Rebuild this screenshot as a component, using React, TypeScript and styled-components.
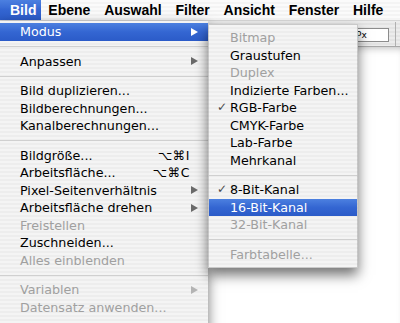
import React from 'react'
import styled, { createGlobalStyle, css } from 'styled-components'

const GlobalStyle = createGlobalStyle`
    html, body {
        margin: 0;
        padding: 0;
        background: #fff;
        overflow: hidden;
    }
`

const pinstripe = (a: string, b: string) => css`
    background: repeating-linear-gradient(to bottom, ${a} 0px, ${a} 2px, ${b} 2px, ${b} 4px);
`

const highlight = css`
    background: linear-gradient(to bottom, #4c80e0 0%, #3466d2 50%, #2b5bc8 100%);
    color: #fff;
`

const Screen = styled.div`
    position: relative;
    width: 400px;
    height: 323px;
    overflow: hidden;
    display: flex;
    flex-direction: column;
    font-family: 'DejaVu Sans', 'Lucida Grande', sans-serif;
`

const MenuBar = styled.div`
    height: 21px;
    flex: none;
    display: flex;
    ${pinstripe('#fbfbfb', '#f4f4f4')}
    border-bottom: 1px solid #d6d6d6;
    box-sizing: border-box;
`

const BarItem = styled.div<{ $active?: boolean; $first?: boolean }>`
    display: flex;
    align-items: center;
    padding-left: ${(p) => (p.$first ? '10px' : '6.9px')};
    padding-right: ${(p) => (p.$first ? '5px' : '6.9px')};
    font-family: 'Liberation Sans', Arial, sans-serif;
    font-weight: bold;
    font-size: 14px;
    color: #000;
    ${(p) => p.$active && highlight}
`

const Workspace = styled.div`
    flex: 1;
    display: flex;
    flex-direction: column;
`

const Toolbar = styled.div`
    height: 26px;
    flex: none;
    display: flex;
    justify-content: flex-end;
    align-items: center;
    gap: 6px;
    padding-right: 4px;
    ${pinstripe('#ececec', '#e3e3e3')}
    border-bottom: 1px solid #a8a8a8;
    box-sizing: border-box;
`

const UnitField = styled.div`
    width: 32px;
    height: 12px;
    margin-top: 2px;
    background: #fff;
    border: 1px solid #8c8c8c;
    font-size: 9px;
    line-height: 12px;
    padding-left: 1px;
    color: #000;
`

const ToolDivider = styled.div`
    width: 1px;
    height: 24px;
    background: #b0b0b0;
`

const Canvas = styled.div`
    flex: 1;
    background: #fff;
    box-shadow: inset 0 6px 8px -6px rgba(0, 0, 0, 0.35);
`

const Menu = styled.div<{ $left: number; $top: number; $width: number }>`
    position: absolute;
    left: ${(p) => p.$left}px;
    top: ${(p) => p.$top}px;
    width: ${(p) => p.$width}px;
    box-sizing: border-box;
    ${pinstripe('#f4f4f4', '#ededed')}
    box-shadow: 0 5px 12px rgba(0, 0, 0, 0.55);
`

const MainMenu = styled(Menu)`
    padding: 2px 0 40px;
`

const SubMenu = styled(Menu)`
    padding: 4px 0;
    border: 1px solid rgba(120, 120, 120, 0.35);
    box-shadow: 0 7px 12px rgba(0, 0, 0, 0.55);
`

const Row = styled.div<{ $disabled?: boolean; $active?: boolean; $indent: number }>`
    position: relative;
    height: 17.5px;
    display: flex;
    align-items: center;
    padding-left: ${(p) => p.$indent}px;
    font-size: 12.7px;
    color: ${(p) => (p.$disabled ? '#a0a0a0' : '#000')};
    white-space: nowrap;
    ${(p) => p.$active && highlight}
`

const Label = styled.span`
    flex: 1;
`

const Check = styled.span`
    position: absolute;
    left: 8px;
    top: 0;
    line-height: 17.5px;
    font-size: 12px;
    color: #4a4a4a;
`

const Shortcut = styled.span`
    margin-right: 18px;
    font-size: 12.5px;
    letter-spacing: 0.5px;
`

const Arrow = styled.span<{ $disabled?: boolean; $active?: boolean }>`
    width: 0;
    height: 0;
    margin-right: 10px;
    border-top: 4.5px solid transparent;
    border-bottom: 4.5px solid transparent;
    border-left: 7px solid ${(p) => (p.$active ? '#fff' : p.$disabled ? '#b4b4b4' : '#6a6a6a')};
`

const Separator = styled.div`
    height: 12px;
    display: flex;
    align-items: center;
    &::after {
        content: '';
        flex: 1;
        height: 1px;
        background: #d0d0d0;
    }
`

type Entry =
    | { sep: true }
    | {
          sep?: false
          label: string
          disabled?: boolean
          active?: boolean
          checked?: boolean
          shortcut?: string
          sub?: boolean
      }

const bildMenu: Entry[] = [
    { label: 'Modus', active: true, sub: true },
    { sep: true },
    { label: 'Anpassen', sub: true },
    { sep: true },
    { label: 'Bild duplizieren...' },
    { label: 'Bildberechnungen...' },
    { label: 'Kanalberechnungen...' },
    { sep: true },
    { label: 'Bildgröße...', shortcut: '⌥⌘I' },
    { label: 'Arbeitsfläche...', shortcut: '⌥⌘C' },
    { label: 'Pixel-Seitenverhältnis', sub: true },
    { label: 'Arbeitsfläche drehen', sub: true },
    { label: 'Freistellen', disabled: true },
    { label: 'Zuschneiden...' },
    { label: 'Alles einblenden', disabled: true },
    { sep: true },
    { label: 'Variablen', disabled: true, sub: true },
    { label: 'Datensatz anwenden...', disabled: true },
]

const modusMenu: Entry[] = [
    { label: 'Bitmap', disabled: true },
    { label: 'Graustufen' },
    { label: 'Duplex', disabled: true },
    { label: 'Indizierte Farben...' },
    { label: 'RGB-Farbe', checked: true },
    { label: 'CMYK-Farbe' },
    { label: 'Lab-Farbe' },
    { label: 'Mehrkanal' },
    { sep: true },
    { label: '8-Bit-Kanal', checked: true },
    { label: '16-Bit-Kanal', active: true },
    { label: '32-Bit-Kanal', disabled: true },
    { sep: true },
    { label: 'Farbtabelle...', disabled: true },
]

const MenuRows = ({ items, indent }: { items: Entry[]; indent: number }) => (
    <>
        {items.map((it, i) =>
            it.sep ? (
                <Separator key={i} />
            ) : (
                <Row key={i} $disabled={it.disabled} $active={it.active} $indent={indent}>
                    {it.checked && <Check>✓</Check>}
                    <Label>{it.label}</Label>
                    {it.shortcut && <Shortcut>{it.shortcut}</Shortcut>}
                    {it.sub && <Arrow $disabled={it.disabled} $active={it.active} />}
                </Row>
            )
        )}
    </>
)

const menuBar = ['Bild', 'Ebene', 'Auswahl', 'Filter', 'Ansicht', 'Fenster', 'Hilfe']

export default function App() {
    return (
        <Screen>
            <GlobalStyle />
            <MenuBar>
                {menuBar.map((m, i) => (
                    <BarItem key={m} $active={i === 0} $first={i === 0}>
                        {m}
                    </BarItem>
                ))}
            </MenuBar>
            <Workspace>
                <Toolbar>
                    <UnitField>Px</UnitField>
                    <ToolDivider />
                </Toolbar>
                <Canvas />
            </Workspace>
            <MainMenu $left={0} $top={21} $width={208}>
                <MenuRows items={bildMenu} indent={20} />
            </MainMenu>
            <SubMenu $left={208} $top={24} $width={150}>
                <MenuRows items={modusMenu} indent={21} />
            </SubMenu>
        </Screen>
    )
}
